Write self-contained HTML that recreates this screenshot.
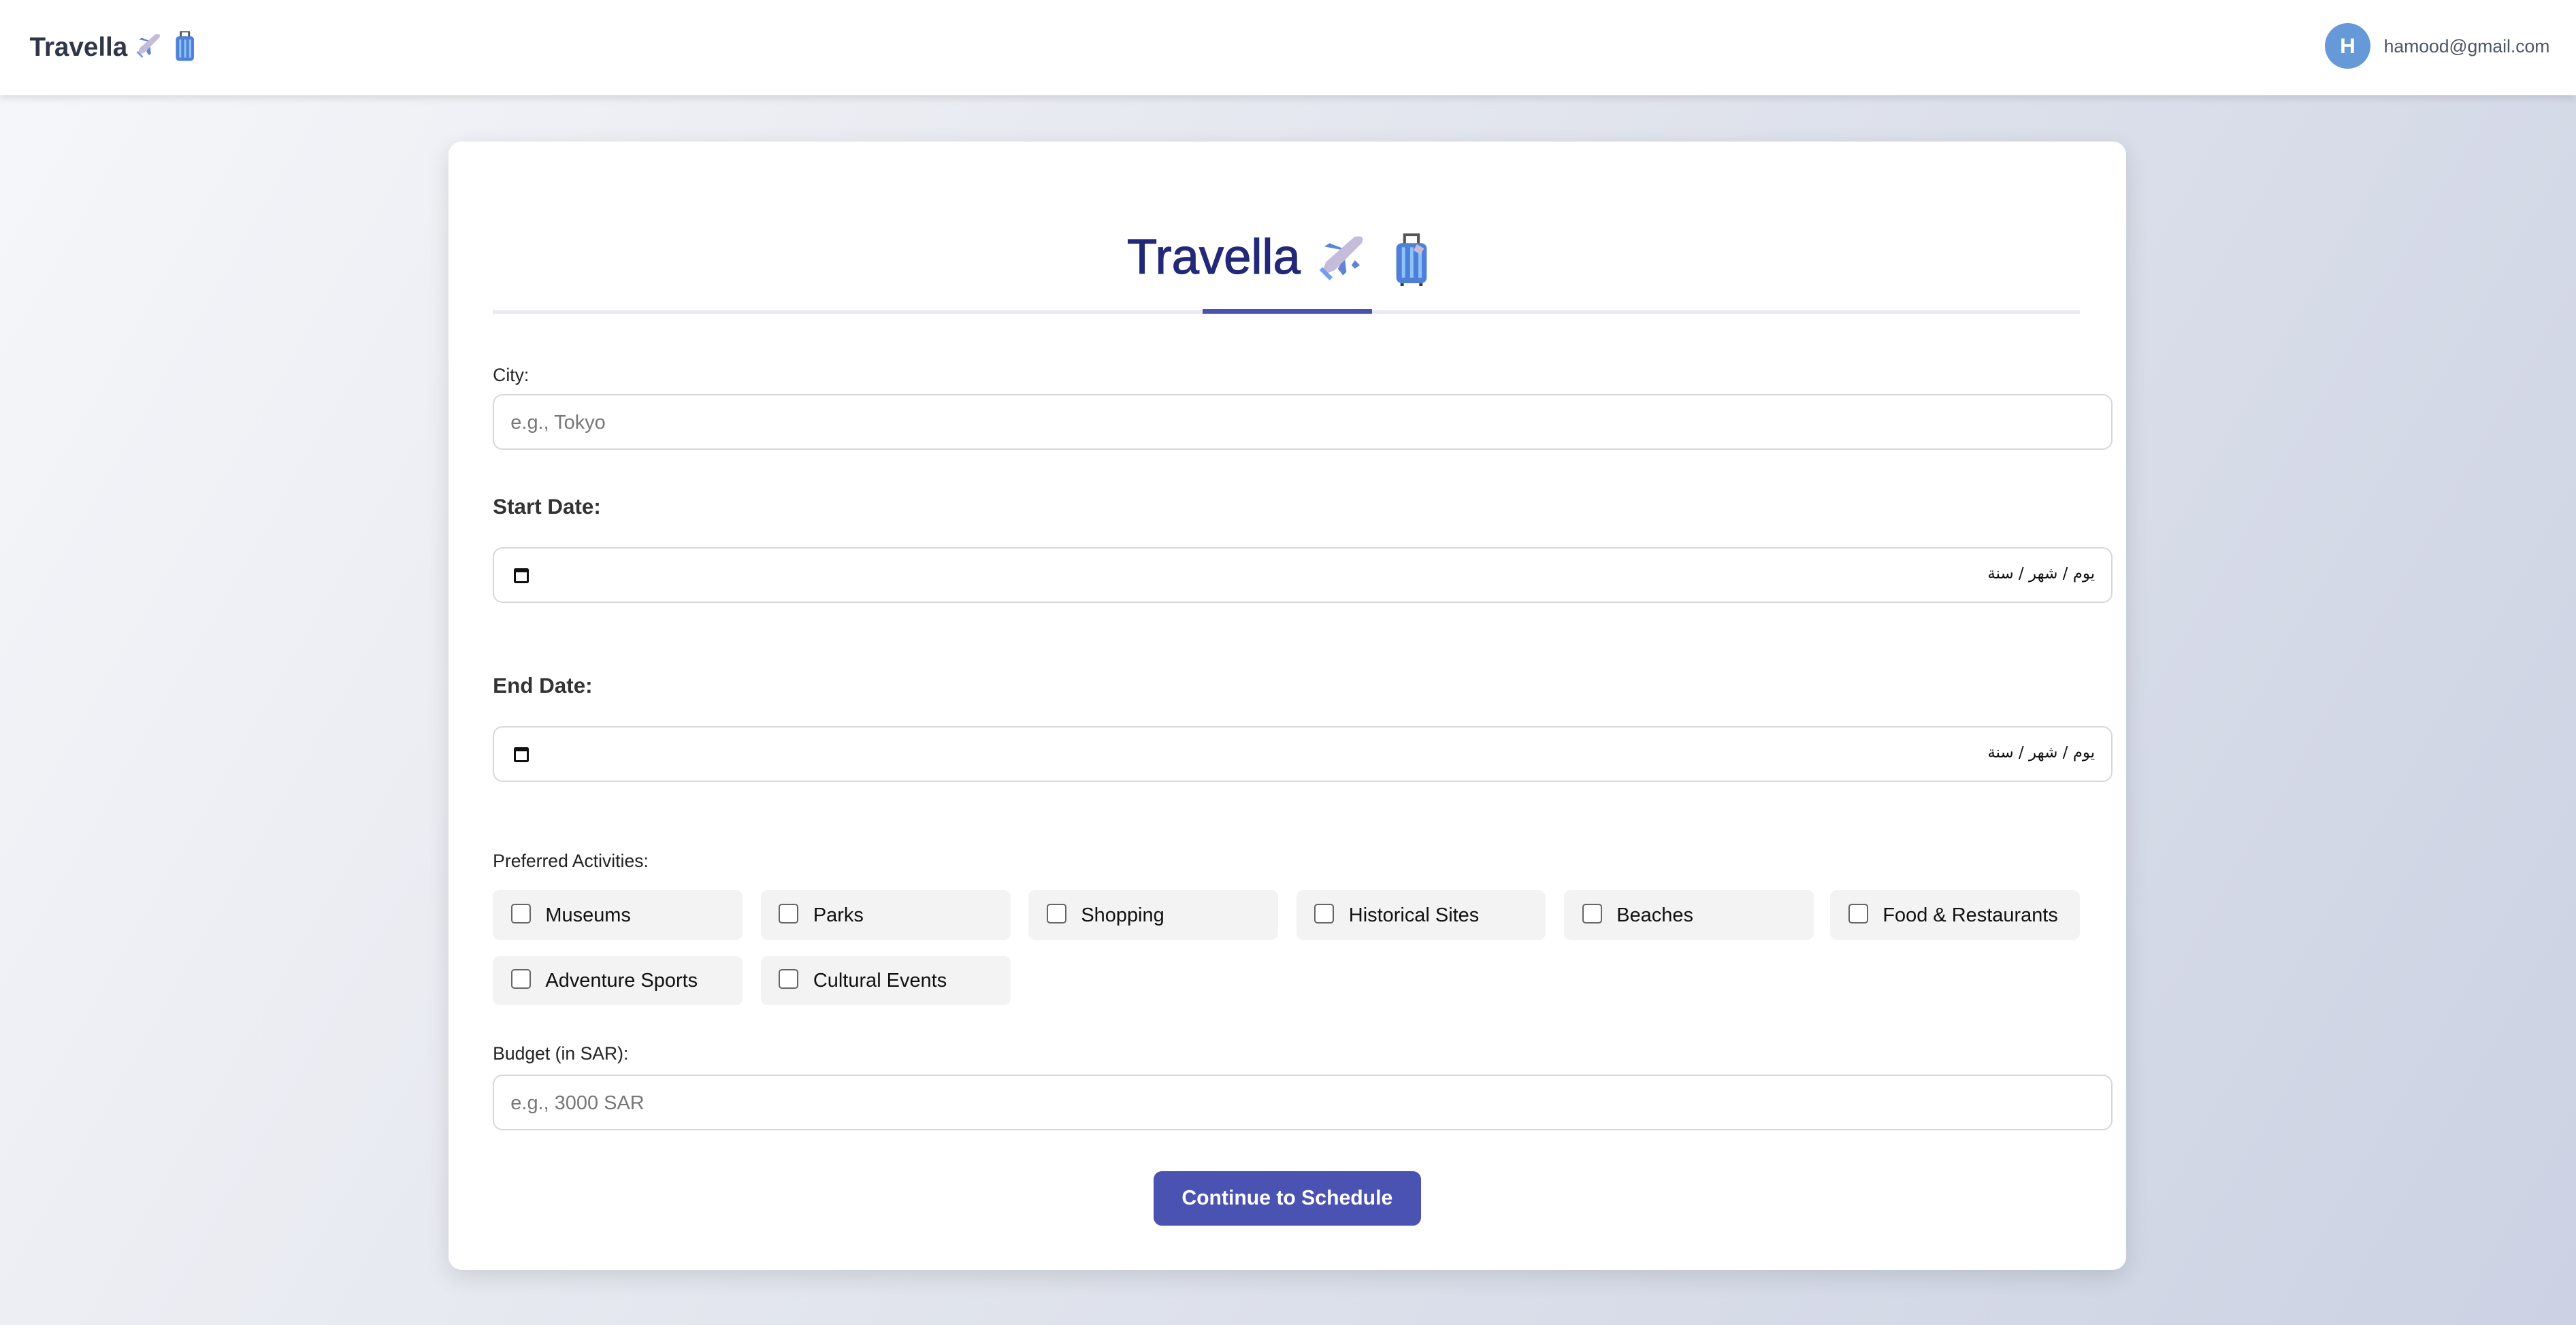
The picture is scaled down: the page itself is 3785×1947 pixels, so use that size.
<!DOCTYPE html>
<html><head><meta charset="utf-8"><style>
*{box-sizing:border-box;margin:0;padding:0}
html,body{width:3785px;height:1947px;overflow:hidden}
#r{zoom:2.41391;width:1568px;height:807px;position:relative;font-family:"Liberation Sans","DejaVu Sans",sans-serif;background:linear-gradient(120deg,#f6f7fa 0%,#e3e6ee 45%,#ccd2e3 100%)}
.a{position:absolute}
.hdr{left:0;top:0;width:1568px;height:58px;background:#fff;box-shadow:0 2px 4px rgba(0,0,0,.1)}
.card{left:273px;top:86px;width:1021px;height:687px;background:#fff;border-radius:8px;box-shadow:0 4px 14px rgba(0,0,0,.12)}
.lbl{font-size:11px;color:#222;left:300px}
.h{font-size:13px;color:#333;font-weight:bold;left:300px}
.in{left:300px;width:986px;height:34px;border:1px solid #d8d8d8;border-radius:6px;background:#fff}
.ph{position:absolute;left:10px;top:10px;font-size:12px;color:#777}
.date{position:absolute;right:10px;top:10px;font-size:9.5px;color:#111;font-family:"DejaVu Sans",sans-serif}
.cal{position:absolute;left:12px;top:12px;width:9px;height:9px;border:1.5px solid #111;border-top-width:2.5px;border-radius:1px}
.chip{width:152px;height:30px;background:#f3f3f3;border-radius:4px}
.chip i{position:absolute;left:11px;top:8px;width:12px;height:12px;border:1px solid #666;border-radius:2px;background:#fff}
.chip span{position:absolute;left:32px;top:8.5px;font-size:12px;color:#111}
</style></head><body><div id="r">
<div class="a hdr">
 <div class="a" style="left:18px;top:20px;font-size:16px;font-weight:bold;color:#2d3748">Travella</div>
 <svg class="a" style="left:81px;top:19px" width="18" height="18" viewBox="0 0 32 32"><path d="M6 9l3-2 13 5z" fill="#5d84d8"/><path d="M14 22l3 4 2-2-1-9z" fill="#5d84d8"/><path d="M27 3c2 0 2 2 1 4L12 23l-5 2-2-2 2-5L24 3z" fill="#c4bcd8"/><path d="M4 22l6 6" stroke="#6fa0f0" stroke-width="2"/></svg>
 <svg class="a" style="left:106px;top:19px" width="13" height="19" viewBox="0 0 13 19"><rect x="4" y="0" width="5" height="4" fill="none" stroke="#555" stroke-width="1.2"/><rect x="1" y="3" width="11" height="15" rx="2" fill="#4f7fd6"/><rect x="3" y="5" width="1.3" height="11" fill="#8cc4ff"/><rect x="6" y="5" width="1.3" height="11" fill="#8cc4ff"/><rect x="9" y="5" width="1.3" height="11" fill="#8cc4ff"/></svg>
 <div class="a" style="left:1415px;top:14px;width:28px;height:28px;border-radius:50%;background:#6699d8;color:#fff;font-weight:bold;font-size:13px;text-align:center;line-height:28px">H</div>
 <div class="a" style="left:1451px;top:22px;font-size:11px;color:#4a5568">hamood@gmail.com</div>
</div>
<div class="a card"></div>
<div class="a" style="left:686px;top:139px;font-size:30px;color:#232878;-webkit-text-stroke:0.5px #232878">Travella</div>
<svg class="a" style="left:800px;top:141px" width="33" height="33" viewBox="0 0 32 32"><path d="M6 9l3-2 13 5z" fill="#5d84d8"/><path d="M14 22l3 4 2-2-1-9z" fill="#5d84d8"/><path d="M20 10l2-3 3 3-3 2zM22 20l2-3 3 3-3 2z" fill="#5d84d8"/><path d="M27 3c2 0 2 2 1 4L12 23l-5 2-2-2 2-5L24 3z" fill="#c4bcd8"/><path d="M4 22l6 6" stroke="#6fa0f0" stroke-width="2.5"/></svg>
<svg class="a" style="left:847px;top:142px" width="24" height="32" viewBox="0 0 13 19"><rect x="4" y="0.5" width="5" height="4" fill="none" stroke="#555" stroke-width="1"/><rect x="1" y="3.5" width="11" height="14.5" rx="2" fill="#4f7fd6"/><rect x="3" y="5" width="1.2" height="11" fill="#8cc4ff"/><rect x="6" y="5" width="1.2" height="11" fill="#8cc4ff"/><rect x="9" y="5" width="1.2" height="11" fill="#8cc4ff"/><rect x="7.5" y="4.5" width="3" height="2.5" fill="#c4bcd8" transform="rotate(30 9 6)"/><rect x="2.5" y="18" width="1.2" height="1" fill="#333"/><rect x="9.3" y="18" width="1.2" height="1" fill="#333"/></svg>
<div class="a" style="left:300px;top:189px;width:966px;height:2px;background:#e8e8f4"></div>
<div class="a" style="left:732px;top:188px;width:103px;height:3px;background:#4a52b0"></div>

<div class="a lbl" style="top:222px">City:</div>
<div class="a in" style="top:240px"><span class="ph">e.g., Tokyo</span></div>
<div class="a h" style="top:301px">Start Date:</div>
<div class="a in" style="top:333px"><i class="cal"></i><span class="date" dir="rtl">يوم / شهر / سنة</span></div>
<div class="a h" style="top:410px">End Date:</div>
<div class="a in" style="top:442px"><i class="cal"></i><span class="date" dir="rtl">يوم / شهر / سنة</span></div>
<div class="a lbl" style="top:518px">Preferred Activities:</div>

<div class="a chip" style="left:300px;top:542px"><i></i><span>Museums</span></div>
<div class="a chip" style="left:463px;top:542px"><i></i><span>Parks</span></div>
<div class="a chip" style="left:626px;top:542px"><i></i><span>Shopping</span></div>
<div class="a chip" style="left:789px;top:542px"><i></i><span>Historical Sites</span></div>
<div class="a chip" style="left:952px;top:542px"><i></i><span>Beaches</span></div>
<div class="a chip" style="left:1114px;top:542px"><i></i><span>Food &amp; Restaurants</span></div>
<div class="a chip" style="left:300px;top:582px"><i></i><span>Adventure Sports</span></div>
<div class="a chip" style="left:463px;top:582px"><i></i><span>Cultural Events</span></div>

<div class="a lbl" style="top:635px">Budget (in SAR):</div>
<div class="a in" style="top:654px"><span class="ph">e.g., 3000 SAR</span></div>
<div class="a" style="left:702px;top:713px;width:163px;height:33px;background:#4a52b2;border-radius:5px;color:#fff;font-weight:bold;font-size:12.5px;text-align:center;line-height:33px">Continue to Schedule</div>
</div></body></html>
